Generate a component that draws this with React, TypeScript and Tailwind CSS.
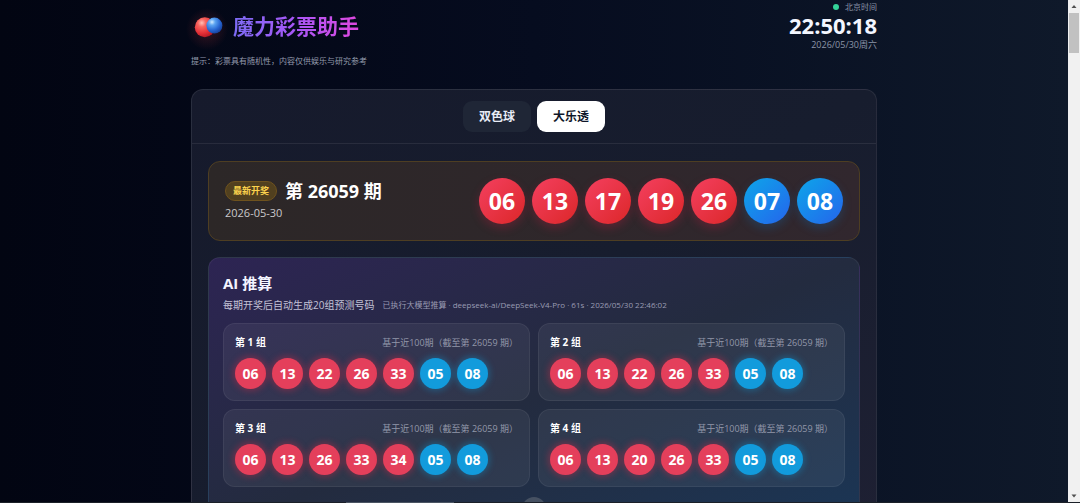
import { useState } from "react";

const RED_COUNT = 5;

const latest = {
  issue: "26059",
  date: "2026-05-30",
  numbers: ["06", "13", "17", "19", "26", "07", "08"],
};

const groups = [
  ["06", "13", "22", "26", "33", "05", "08"],
  ["06", "13", "22", "26", "33", "05", "08"],
  ["06", "13", "26", "33", "34", "05", "08"],
  ["06", "13", "20", "26", "33", "05", "08"],
];

const tabs = ["双色球", "大乐透"];

function Logo() {
  return (
    <svg viewBox="0 0 34 34" className="w-[34px] h-[34px] shrink-0 overflow-visible" aria-hidden="true">
      <defs>
        <radialGradient id="redBall" cx="0.35" cy="0.28" r="0.8">
          <stop offset="0" stopColor="#ffc0b8" />
          <stop offset="0.25" stopColor="#f8655f" />
          <stop offset="0.65" stopColor="#e32f36" />
          <stop offset="1" stopColor="#a81420" />
        </radialGradient>
        <radialGradient id="blueBall" cx="0.35" cy="0.28" r="0.8">
          <stop offset="0" stopColor="#d3ecff" />
          <stop offset="0.25" stopColor="#5ba4f2" />
          <stop offset="0.65" stopColor="#2563d0" />
          <stop offset="1" stopColor="#143a8f" />
        </radialGradient>
        <radialGradient id="logoGlow">
          <stop offset="0" stopColor="#ef4444" stopOpacity="0.22" />
          <stop offset="1" stopColor="#ef4444" stopOpacity="0" />
        </radialGradient>
      </defs>
      <circle cx="16" cy="20" r="21" fill="url(#logoGlow)" />
      <circle cx="13.800" cy="18.3" r="10" fill="url(#redBall)" />
      <circle cx="23.4" cy="16.6" r="8" fill="url(#blueBall)" />
    </svg>
  );
}

function BigBall({ value, blue }: { value: string; blue: boolean }) {
  return (
    <span
      className={`flex items-center justify-center w-[46px] h-[46px] rounded-full text-[23px] font-bold text-white bg-linear-to-br ${
        blue
          ? "from-[#0ea5e9] to-[#2563eb] shadow-[0_4px_10px_rgba(14,120,200,0.25)]"
          : "from-[#f43f5e] to-[#dc2626] shadow-[0_4px_10px_rgba(225,29,72,0.25)]"
      }`}
    >
      {value}
    </span>
  );
}

function SmallBall({ value, blue }: { value: string; blue: boolean }) {
  return (
    <span
      className={`flex items-center justify-center w-[31px] h-[31px] rounded-full text-sm font-bold text-white ${
        blue
          ? "bg-[#129bdc] shadow-[0_0_6px_2px_rgba(14,165,233,0.3)]"
          : "bg-[#e43f5b] shadow-[0_0_6px_2px_rgba(225,40,70,0.35)]"
      }`}
    >
      {value}
    </span>
  );
}

function GroupCard({ index, numbers }: { index: number; numbers: string[] }) {
  return (
    <li className="rounded-xl border border-white/6 bg-white/6 p-[11px]">
      <div className="flex items-center justify-between h-[15px] mb-2">
        <h3 className="text-[10px] font-bold text-white">第 {index} 组</h3>
        <span className="text-[9px] text-[#9297a9]">基于近100期（截至第 {latest.issue} 期）</span>
      </div>
      <div className="flex gap-1.5">
        {numbers.map((n, i) => (
          <SmallBall key={i} value={n} blue={i >= RED_COUNT} />
        ))}
      </div>
    </li>
  );
}

function ScrollBar() {
  return (
    <div className="w-3 shrink-0 flex flex-col items-center bg-[#f1f1f1]" aria-hidden="true">
      <svg viewBox="0 0 12 13" className="w-3 h-[13px] shrink-0">
        <path d="M3.5 8 L6 5 L8.5 8 Z" fill="#505050" />
      </svg>
      <div className="w-2.5 h-10 bg-[#c1c1c1]" />
      <div className="flex-1" />
      <svg viewBox="0 0 12 13" className="w-3 h-[13px] shrink-0">
        <path d="M3.5 5.5 L6 8.5 L8.5 5.5 Z" fill="#505050" />
      </svg>
    </div>
  );
}

export default function App() {
  const [activeTab, setActiveTab] = useState(1);

  return (
    <div className="h-screen flex flex-col overflow-hidden font-['Open_Sans','Noto_Sans_CJK_SC',sans-serif] text-white">
      <div className="flex-1 min-h-0 flex">
        <main className="flex-1 min-w-0 overflow-hidden bg-linear-to-r from-[#020512] via-[#060c1f] to-[#0f192a]">
          <div className="w-full max-w-[686px] mx-auto">
            <header>
              <div className="flex items-start justify-between">
                <div className="flex items-center gap-2 h-13">
                  <Logo />
                  <h1 className="text-[21px] leading-7 font-bold bg-linear-to-r from-[#7c6cf6] via-[#a855f7] to-[#e046df] bg-clip-text text-transparent">
                    魔力彩票助手
                  </h1>
                </div>
                <div className="text-right">
                  <p className="flex items-center justify-end gap-1.5 text-[8px] leading-[14px] text-[#8b95a8]">
                    <span className="w-1.5 h-1.5 rounded-full bg-[#34d399]" />
                    北京时间
                  </p>
                  <p className="text-[22px] leading-[22px] font-bold text-[#f3f6ff]">22:50:18</p>
                  <p className="text-[9px] leading-[18px] text-[#8b95a8]">2026/05/30周六</p>
                </div>
              </div>
              <p className="mt-px text-[8px] leading-3 text-[#949cad]">
                提示：彩票具有随机性，内容仅供娱乐与研究参考
              </p>
            </header>

            <section className="mt-[22px] rounded-t-xl border border-b-0 border-white/8 bg-linear-to-br from-[#161a2c] via-[#171d2e] to-[#1e2033]">
              <div className="flex justify-center gap-1.5 py-[11px] border-b border-white/8">
                {tabs.map((tab, i) => (
                  <button
                    key={tab}
                    onClick={() => setActiveTab(i)}
                    className={`h-[31px] px-4 rounded-[9px] text-xs font-bold ${
                      activeTab === i ? "bg-white text-[#0f172a]" : "bg-[#1f2636] text-[#e8ecf6]"
                    }`}
                  >
                    {tab}
                  </button>
                ))}
              </div>

              <div className="flex flex-col gap-4 px-4 pt-[17px]">
                {/* Latest draw */}
                <div className="flex items-center justify-between rounded-xl border border-[#4e3e22] bg-linear-to-r from-[#2c2727] to-[#31272e] p-4">
                  <div>
                    <div className="flex items-center gap-2">
                      <span className="h-5 px-[7px] flex items-center rounded-full border border-[#6e521e] bg-[#51401f] text-[9px] font-bold text-[#fcd34d]">
                        最新开奖
                      </span>
                      <h2 className="text-lg leading-6 font-bold">第 {latest.issue} 期</h2>
                    </div>
                    <p className="text-[11px] leading-5 text-[#cbc9cb]">{latest.date}</p>
                  </div>
                  <div className="flex gap-[7px]">
                    {latest.numbers.map((n, i) => (
                      <BigBall key={i} value={n} blue={i >= RED_COUNT} />
                    ))}
                  </div>
                </div>

                {/* AI predictions */}
                <div className="rounded-t-xl border border-b-0 border-white/6 bg-linear-to-br from-[#2d2453] via-[#232b3f] to-[#1a3656] p-3.5">
                  <h2 className="text-[15px] leading-[22px] font-bold text-[#f3f4ff]">AI 推算</h2>
                  <div className="mt-[3px] flex items-center gap-2 leading-4">
                    <p className="text-[10px] text-[#c3c2d6]">每期开奖后自动生成20组预测号码</p>
                    <p className="text-[8px] text-[#9a9cb3]">
                      已执行大模型推算 · deepseek-ai/DeepSeek-V4-Pro · 61s · 2026/05/30 22:46:02
                    </p>
                  </div>
                  <ul className="mt-2.5 grid grid-cols-2 gap-2">
                    {groups.map((numbers, i) => (
                      <GroupCard key={i} index={i + 1} numbers={numbers} />
                    ))}
                  </ul>
                  <button
                    aria-label="展开"
                    className="block mx-auto mt-2.5 w-6 h-6 rounded-full bg-[#465162]"
                  />
                </div>
              </div>
            </section>
          </div>
        </main>
        <ScrollBar />
      </div>
      <div className="h-px shrink-0 bg-[#1b2028]">
        <div className="h-px w-1/10 ml-[32%] bg-[#4b5563]" />
      </div>
    </div>
  );
}
